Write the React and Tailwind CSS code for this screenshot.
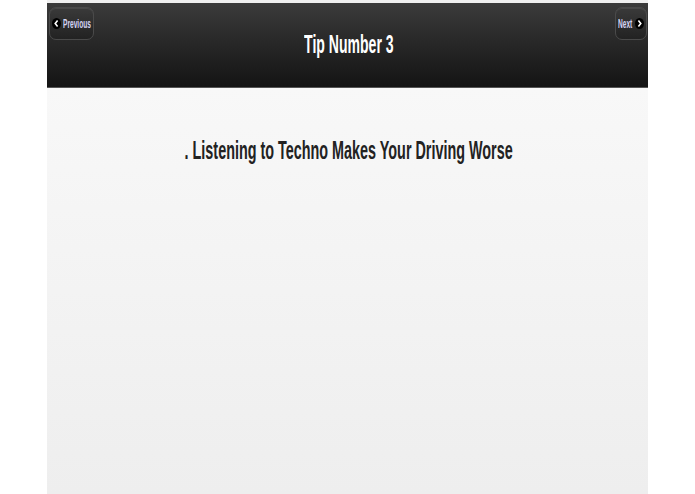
import React from "react";

function ChevronCircle({ dir }) {
  return (
    <svg width="9" height="11" viewBox="0 0 9 11" className="shrink-0">
      <ellipse cx="4.5" cy="5.5" rx="4.5" ry="5.5" fill="#000" />
      {dir === "left" ? (
        <path d="M5.6 2.6 L3.2 5.5 L5.6 8.4" stroke="#fff" strokeWidth="1.6" fill="none" />
      ) : (
        <path d="M3.4 2.6 L5.8 5.5 L3.4 8.4" stroke="#fff" strokeWidth="1.6" fill="none" />
      )}
    </svg>
  );
}

function NavButton({ label, dir, textW }) {
  return (
    <button className="h-[33px] px-[2px] flex items-center gap-[2px] rounded-[7px] border border-[#4a4a4a] bg-gradient-to-b from-[#3a3a3a] to-[#222] shadow-[inset_0_1px_0_rgba(255,255,255,0.08)]">
      {dir === "left" && <ChevronCircle dir="left" />}
      <span className={`${textW} overflow-visible flex`}>
        <span className="font-['Liberation_Sans',Arial,sans-serif] font-bold text-[12px] text-[#d4d4f4] whitespace-nowrap inline-block scale-x-[0.55] origin-left">
          {label}
        </span>
      </span>
      {dir === "right" && <ChevronCircle dir="right" />}
    </button>
  );
}

export default function App() {
  return (
    <div className="w-full h-[494px] bg-white flex justify-center overflow-hidden font-['Liberation_Sans',Arial,sans-serif]">
      <div className="w-[601px] h-full pt-[3px] bg-[#f0f0f0] flex flex-col">
        <div className="relative h-[85px] bg-gradient-to-b from-[#3b3b3b] to-[#141414] border-b border-[#555] flex items-center justify-center">
          <div className="absolute left-[2px] top-[4px]">
            <NavButton label="Previous" dir="left" textW="w-[28px]" />
          </div>
          <div className="absolute right-[1px] top-[4px]">
            <NavButton label="Next" dir="right" textW="w-[15px]" />
          </div>
          <h1 className="text-white font-bold text-[26px] inline-block scale-x-[0.54] ml-[3px] -mt-[2px]">Tip Number 3</h1>
        </div>
        <div className="flex-1 bg-gradient-to-b from-[#f8f8f8] to-[#eeeeee] flex justify-center pt-[43px]">
          <p className="text-[#222] font-bold text-[26px] whitespace-nowrap inline-block scale-x-[0.553] ml-[2px] h-fit">
            . Listening to Techno Makes Your Driving Worse
          </p>
        </div>
      </div>
    </div>
  );
}
